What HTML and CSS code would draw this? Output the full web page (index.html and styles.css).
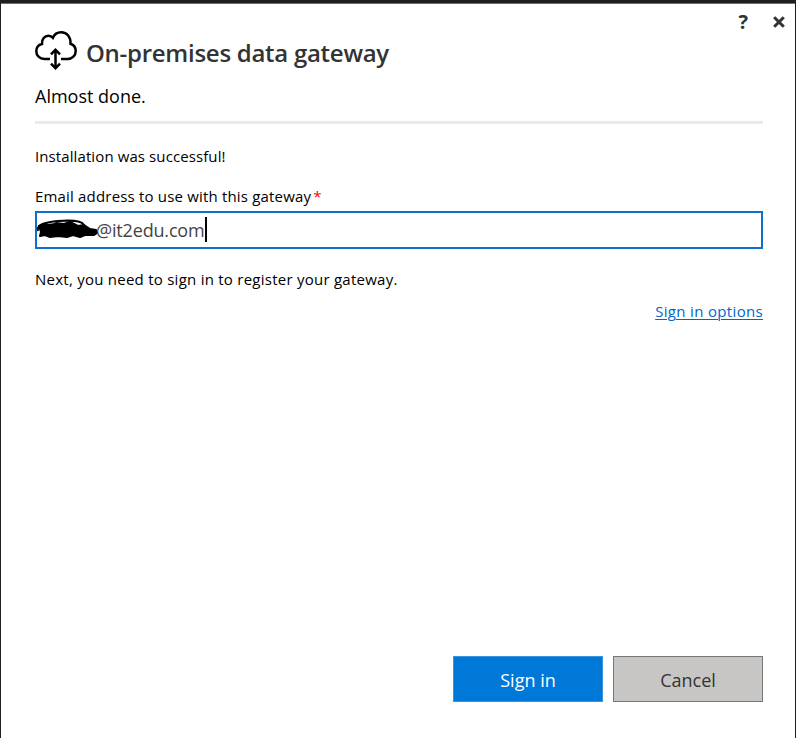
FILE: index.html
```html
<!DOCTYPE html>
<html lang="en">
<head>
<meta charset="utf-8">
<title>On-premises data gateway</title>
<link rel="stylesheet" href="styles.css">
</head>
<body>
<main class="window">
  <nav class="controls">
    <button class="control help" aria-label="Help">?</button>
    <button class="control close" aria-label="Close"><svg width="12" height="12" viewBox="0 0 12 12"><path d="M1.200 1.200 10.800 10.800M10.800 1.200 1.200 10.800"/></svg></button>
  </nav>
  <header class="header">
    <svg class="cloud" width="42" height="40" viewBox="0 0 42 40">
      <path d="M15 28H9.500C4.500 28 1.300 24.500 1.300 20.300c0-3.800 2.300-6.500 5.700-7.300C6.600 8 9.600 4.700 13.500 4.700c1.800 0 3.300.7 4.400 2.100C19.400 3.200 22.500 1.300 26.200 1.300c5.800 0 9.700 4.700 9.300 11.500 3.200 1 5.200 3.800 5.200 7.200 0 4.500-3.400 8-8.200 8H26"/>
      <path d="M20.500 19v18M16 23.300l4.500-4.600 4.500 4.600M16 32.700l4.500 4.600 4.500-4.600"/>
    </svg>
    <h1 class="title">On-premises data gateway</h1>
  </header>
  <p class="subtitle"><span>Almost done.</span></p>
  <p class="status"><span>Installation was successful!</span></p>
  <label class="label"><span class="label-text">Email address to use with this gateway</span><span class="required">*</span></label>
  <div class="field">
    <svg class="scribble" width="61" height="22" viewBox="0 0 61 22">
      <path class="ink" d="M2 8 9 6 14 8 19 5 27 6 33 4 41 8 47 7 53 11 59 12 60 15 57 17 48 17 43 19 36 17 30 19 21 18 13 19 8 17 3 18 4 14Z"/>
      <path class="stroke" d="M1 13C-1 6 10 4 21 3c12-1 24 0 26 4 1 3-4 4-10 2C27 5 12 5 2 10"/>
    </svg><span class="address">@it2edu.com</span><span class="caret"></span>
  </div>
  <p class="next"><span>Next, you need to sign in to register your gateway.</span></p>
  <div class="options"><a class="link" href="#">Sign in options</a></div>
  <footer class="actions">
    <button class="button primary"><span>Sign in</span></button>
    <button class="button secondary"><span>Cancel</span></button>
  </footer>
</main>
</body>
</html>
```
FILE: styles.css
```css
* { box-sizing: border-box; }
body { margin: 0; background: #fff; font-family: "Open Sans", sans-serif; color: #000; }
.window { height: 738px; padding: 0 32px 36px 34px; border: 1px solid #201f1f; border-top: 3px solid #201f1f; border-bottom: 0; box-shadow: inset 0 1px #2b7fc4; display: flex; flex-direction: column; }
p, h1 { margin: 0; }
button { font-family: inherit; border: 0; padding: 0; }
.controls { height: 28px; padding-top: 9px; display: flex; justify-content: flex-end; gap: 24px; margin-right: -23px; }
.control { background: none; height: 20px; color: #333; display: flex; align-items: center; }
.help { font-size: 20px; font-weight: 700; line-height: 20px; }
.close { width: 14px; justify-content: center; }
.close path { stroke: #333; stroke-width: 3; fill: none; }
.header { display: flex; gap: 9px; height: 48px; }
.cloud { flex: none; }
.cloud path { fill: none; stroke: #000; stroke-width: 2.5; }
.title { font-size: 24px; line-height: 34px; font-weight: 600; color: #333; margin-top: 5px; letter-spacing: -0.27px; white-space: nowrap; }
.subtitle { height: 45px; border-bottom: 3px solid #eaeaea; font-size: 18px; line-height: 35px; }
.status { margin-top: 20px; font-size: 15px; line-height: 24px; letter-spacing: 0.1px; }
.label { display: flex; margin-top: 16px; font-size: 15px; line-height: 24px; letter-spacing: 0.18px; }
.required { color: #f00; margin-left: 2px; }
.field { height: 38px; margin-top: 3px; padding-bottom: 1px; border: 2px solid #0f6fcb; display: flex; align-items: center; font-size: 18px; color: #444; }
.scribble { flex: none; margin-top: -1px; }
.ink { fill: #000; stroke: #000; stroke-width: 2; stroke-linejoin: round; }
.stroke { fill: none; stroke: #000; stroke-width: 2; }
.address { margin-left: -2px; letter-spacing: -0.17px; }
.caret { width: 2px; height: 25px; background: #000; }
.next { margin-top: 18px; font-size: 15px; line-height: 24px; letter-spacing: 0.25px; }
.options { margin-top: 8px; text-align: right; font-size: 15px; line-height: 24px; letter-spacing: 0.33px; }
.link { color: #0066cc; text-underline-offset: 2px; text-decoration-thickness: 1px; }
.actions { margin-top: auto; display: flex; justify-content: flex-end; gap: 10px; }
.button { width: 150px; height: 46px; padding-top: 2px; font-size: 18px; }
.primary { background: #0078d7; color: #fff; border: 1px solid #3c96df; }
.secondary { background: #c8c6c4; color: #333; border: 1px solid #777; }
```
